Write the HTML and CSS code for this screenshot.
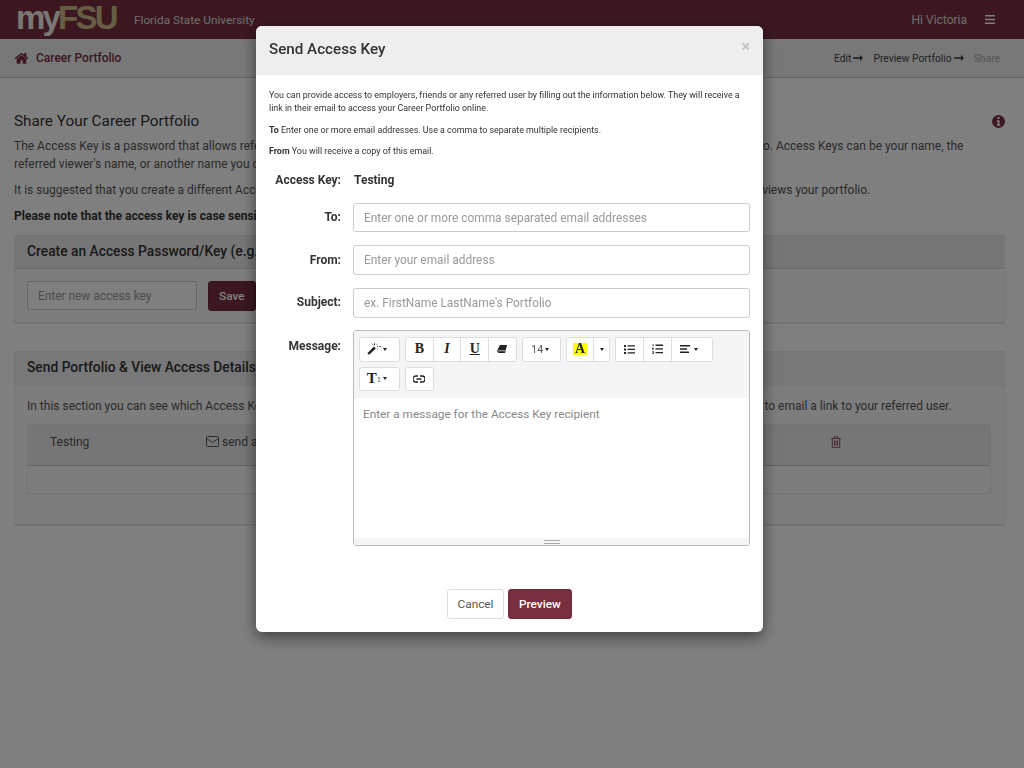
FILE: index.html
```html
<!DOCTYPE html>
<html lang="en">

<head>
  <meta charset="UTF-8">
  <title>Share Your Career Portfolio</title>
  <link rel="stylesheet" href="styles.css">
</head>

<body>
  <!-- Top bar -->
  <header class="topbar">
    <div class="topbar-left">
      <span class="logo"><span class="logo-my">my</span><span class="logo-fsu">FSU</span></span>
      <span class="school">Florida State University</span>
    </div>
    <div class="topbar-right">
      <span>Hi Victoria</span>
      <svg class="burger" width="10" height="9" viewBox="0 0 10 9"><path d="M0 0h10v1.600H0zM0 3.700h10v1.600H0zM0 7.400h10V9H0z" fill="#fff"/></svg>
    </div>
  </header>

  <!-- Breadcrumb bar -->
  <nav class="subbar">
    <div class="crumb">
      <svg width="15" height="12" viewBox="0 192 1792 1344"><path d="M1472 992v480q0 26-19 45t-45 19h-384v-384h-256v384h-384q-26 0-45-19t-19-45v-480q0-1 .5-3t.5-3l575-474 575 474q1 2 1 6zm223-69l-62 74q-8 9-21 11h-3q-13 0-21-7l-692-577-692 577q-12 8-24 7-13-2-21-11l-62-74q-8-10-7-23.500t11-21.500l719-599q32-26 76-26t76 26l244 204v-195q0-14 9-23t23-9h192q14 0 23 9t9 23v408l219 182q10 8 11 21.500t-7 23.500z" fill="#782f40"/></svg>
      <span>Career Portfolio</span>
    </div>
    <div class="steps">
      <span>Edit</span>
      <svg width="10" height="6" viewBox="0 0 10 6"><path d="M0 2.300h7V0l3 3-3 3V3.700H0z" fill="#333"/></svg>
      <span class="step-gap">Preview Portfolio</span>
      <svg width="10" height="6" viewBox="0 0 10 6"><path d="M0 2.300h7V0l3 3-3 3V3.700H0z" fill="#333"/></svg>
      <span class="step-gap step-off">Share</span>
    </div>
  </nav>

  <main class="content">
    <div class="title-row">
      <h2>Share Your Career Portfolio</h2>
      <svg width="13" height="13" viewBox="0 0 13 13"><circle cx="6.500" cy="6.500" r="6.500" fill="#782f40"/><path d="M5.500 2h2v2h-2zM4.800 5.200h2.700v4.300h.8v1.300H4.800V9.500h.8V6.500h-.8z" fill="#fff"/></svg>
    </div>
    <p>The Access Key is a password that allows referred viewers to see the content that you have carefully chosen to include in your Career Portfolio. Access Keys can be your name, the<br>referred viewer's name, or another name you decide on.</p>
    <p>It is suggested that you create a different Access Key for each person you share with, so that you will be able to know when each person first views your portfolio.</p>
    <p class="note">Please note that the access key is case sensitive.</p>

    <section class="panel panel-key">
      <h3 class="panel-head">Create an Access Password/Key (e.g. your name)</h3>
      <div class="panel-body key-form">
        <input class="field key-field" placeholder="Enter new access key">
        <button class="btn btn-main">Save</button>
      </div>
    </section>

    <section class="panel panel-send">
      <h3 class="panel-head head-plain">Send Portfolio &amp; View Access Details</h3>
      <div class="panel-body">
        <p class="send-text">In this section you can see which Access Keys you have created and when they were last used online. Click on "send a link to this portfolio" to email a link to your referred user.</p>
        <div class="keys-table">
          <div class="keys-row">
            <span class="key-name">Testing</span>
            <span class="key-send">
              <svg width="13" height="11" viewBox="0 0 13 11"><path d="M1.500.5h10a1 1 0 0 1 1 1v8a1 1 0 0 1-1 1h-10a1 1 0 0 1-1-1v-8a1 1 0 0 1 1-1zM.8 2.500l5.700 4 5.700-4" fill="none" stroke="#555"/></svg>
              send a link
            </span>
            <svg class="key-trash" width="10" height="12" viewBox="0 0 10 12"><path d="M0 2.500h10M3.300 2.500V.7h3.400v1.800M1.300 2.500v8.800h7.400V2.500M3.500 4.500v5M5 4.500v5M6.500 4.500v5" fill="none" stroke="#782f40" stroke-width=".8"/></svg>
          </div>
          <div class="keys-foot"></div>
        </div>
      </div>
    </section>
  </main>

  <!-- Send access key dialog -->
  <div class="backdrop">
    <div class="modal">
      <div class="modal-head">
        <h4>Send Access Key</h4>
        <span class="close">×</span>
      </div>
      <div class="modal-body">
        <p>You can provide access to employers, friends or any referred user by filling out the information below. They will receive a link in their email to access your Career Portfolio online.</p>
        <p><b>To</b> Enter one or more email addresses. Use a comma to separate multiple recipients.</p>
        <p><b>From</b> You will receive a copy of this email.</p>

        <div class="form-row row-key">
          <label>Access Key:</label>
          <b class="key-value">Testing</b>
        </div>
        <div class="form-row row-to">
          <label>To:</label>
          <input class="field" placeholder="Enter one or more comma separated email addresses">
        </div>
        <div class="form-row row-from">
          <label>From:</label>
          <input class="field" placeholder="Enter your email address">
        </div>
        <div class="form-row row-subject">
          <label>Subject:</label>
          <input class="field" placeholder="ex. FirstName LastName's Portfolio">
        </div>
        <div class="form-row row-message">
          <label>Message:</label>
          <div class="editor">
            <div class="toolbar">
              <div class="tool-group">
                <button class="tool tool-wide">
                  <svg width="14" height="12" viewBox="0 0 14 12"><path d="M.3 10.300 7 3.600l1.800 1.800-6.700 6.300z" fill="#222"/><path d="M7.500.3v2M10 3.500h.9M12.300 3.500h1.400M9.800 1.500l.7-.7M9.800 5.500l.7.7M5.500 1.500l-.7-.7" stroke="#222" fill="none"/></svg>
                  <i class="caret"></i>
                </button>
              </div>
              <div class="tool-group">
                <button class="tool tool-b">B</button>
                <button class="tool tool-i">I</button>
                <button class="tool tool-u">U</button>
                <button class="tool">
                  <svg width="10" height="9" viewBox="0 0 10 9"><path d="M3 0h7L8 8H1.500L0 6z" fill="#222"/><path d="M1 5.800h7.500" stroke="#fff" stroke-width=".7"/></svg>
                </button>
              </div>
              <div class="tool-group">
                <button class="tool tool-size">14<i class="caret"></i></button>
              </div>
              <div class="tool-group">
                <button class="tool tool-color"><span class="hl">A</span></button>
                <button class="tool tool-arrow"><i class="caret"></i></button>
              </div>
              <div class="tool-group">
                <button class="tool">
                  <svg width="11" height="9" viewBox="0 0 11 9"><path d="M0 0h2v2H0zM0 3.500h2v2H0zM0 7h2v2H0zM3.500.3H11v1.300H3.500zM3.500 3.800H11v1.300H3.500zM3.500 7.300H11v1.300H3.500z" fill="#222"/></svg>
                </button>
                <button class="tool">
                  <svg width="11" height="10" viewBox="0 0 11 10"><path d="M3.500.6H11v1.300H3.500zM3.500 4.300H11v1.300H3.500zM3.500 8H11v1.300H3.500zM.7 0h.8v2.500H.7zM0 3.800h1.800v.6H.7v.4h1.100v.6H0zM0 7.300h1.800V10H0v-.5h1.100v-.5H.4v-.4h.7V7.800H0z" fill="#222"/></svg>
                </button>
                <button class="tool tool-wide tool-align">
                  <svg width="10" height="8" viewBox="0 0 10 8"><path d="M0 0h10v1.400H0zM0 3.300h7v1.400H0zM0 6.600h9V8H0z" fill="#222"/></svg>
                  <i class="caret"></i>
                </button>
              </div>
              <div class="tool-group">
                <button class="tool tool-wide tool-t">T<span class="t-bar">↕</span><i class="caret"></i></button>
              </div>
              <div class="tool-group">
                <button class="tool">
                  <svg width="12" height="8" viewBox="0 0 12 8"><path d="M5 1H3a3 3 0 0 0 0 6h2M7 1h2a3 3 0 0 1 0 6H7M3.500 4h5" fill="none" stroke="#222" stroke-width="1.300"/></svg>
                </button>
              </div>
            </div>
            <div class="editor-text">Enter a message for the Access Key recipient</div>
            <div class="statusbar"><span class="grip"></span></div>
          </div>
        </div>
      </div>
      <div class="modal-foot">
        <button class="btn btn-plain">Cancel</button>
        <button class="btn btn-main">Preview</button>
      </div>
    </div>
  </div>
</body>

</html>
```

FILE: styles.css
```css
* {
  box-sizing: border-box;
}

body {
  margin: 0;
  height: 768px;
  overflow: hidden;
  font-family: 'Roboto', 'Liberation Sans', sans-serif;
  font-size: 12px;
  color: #333;
  background-color: #fff;
}

.topbar {
  height: 39px;
  background-color: #782f40;
  display: flex;
  justify-content: space-between;
  align-items: center;
  padding: 0 29px 0 18px;
  color: #fff;
}

.topbar-left {
  display: flex;
  align-items: center;
}

.logo {
  font-family: 'Liberation Sans', sans-serif;
  font-size: 33px;
  font-weight: bold;
  letter-spacing: -2.800px;
  line-height: 33px;
  width: 118px;
  margin: -5px 0 0 -2px;
}

.logo-my {
  color: #f4f0e8;
}

.logo-fsu {
  color: #ceb888;
}

.school {
  color: #ddd;
  font-size: 11.800px;
}

.topbar-right {
  display: flex;
  align-items: center;
  gap: 18px;
  color: #ddd;
}

.subbar {
  height: 39px;
  background-color: #f0f0f0;
  border-bottom: 1px solid #ccc;
  display: flex;
  justify-content: space-between;
  align-items: center;
  padding: 0 24px 0 14px;
}

.crumb {
  display: flex;
  align-items: center;
  gap: 7px;
  color: #782f40;
  font-weight: 500;
}

.steps {
  display: flex;
  align-items: center;
  gap: 2px;
  font-size: 10.300px;
  color: #444;
}

.step-gap {
  margin-left: 8px;
}

.step-off {
  color: #aaa;
}

.content {
  padding: 33px 19px 0 14px;
}

.title-row {
  display: flex;
  justify-content: space-between;
  align-items: center;
  margin-bottom: 6px;
}

h2 {
  margin: 0;
  font-size: 15.300px;
  font-weight: 400;
  line-height: 20px;
  color: #333;
}

.content p {
  margin: 0 0 8px;
  line-height: 18px;
  color: #555;
  width: 985px;
}

.content .note {
  font-weight: 700;
  color: #333;
  margin-bottom: 10px;
}

.panel {
  border: 1px solid #e8e8e8;
  border-bottom-width: 2px;
  background-color: #fbfbfb;
}

.panel-key {
  height: 89px;
  margin-bottom: 27px;
}

.panel-send {
  height: 175px;
}

.panel-head {
  margin: 0;
  height: 33px;
  padding: 0 12px;
  font-size: 13.800px;
  font-weight: 500;
  line-height: 31px;
  background-color: #ececec;
  border-bottom: 1px solid #d8d8d8;
  color: #333;
}

.head-plain {
  height: 34px;
  border-bottom: none;
  line-height: 30px;
  background-color: #f0f0f0;
}

.panel-body {
  padding: 12px 12px;
}

.key-form {
  display: flex;
  gap: 11px;
}

.panel-send .panel-body {
  padding-top: 11px;
}

.content .send-text {
  width: 940px;
  white-space: nowrap;
  margin-bottom: 9px;
}

.keys-table {
  width: 964px;
  border: 1px solid #e4e4e4;
}

.keys-row {
  height: 41px;
  background-color: #ececec;
  border-bottom: 1px solid #ccc;
  display: flex;
  align-items: center;
  padding: 0 0 7px 22px;
}

.key-name {
  width: 156px;
  color: #555;
}

.key-send {
  width: 625px;
  display: flex;
  align-items: center;
  gap: 3px;
  color: #555;
}

.keys-foot {
  height: 27px;
}

.field {
  display: block;
  width: 100%;
  height: 29px;
  border: 1px solid #ccc;
  border-radius: 3px;
  padding: 0 10px;
  font-family: inherit;
  font-size: 11.900px;
  background-color: #fff;
}

.key-field {
  width: 170px;
}

.field::placeholder {
  color: #999;
}

.btn {
  height: 30px;
  padding: 0 10px;
  border-radius: 3px;
  font-family: inherit;
  font-size: 11.800px;
  font-weight: 500;
}

.btn-main {
  background-color: #782f40;
  border: 1px solid #6a2636;
  color: #fff;
}

.btn-plain {
  width: 57px;
  padding: 0;
  background-color: #fff;
  border: 1px solid #ddd;
  color: #555;
  font-weight: 400;
}

/* dialog */
.backdrop {
  position: fixed;
  top: 0;
  left: 0;
  width: 100%;
  height: 100%;
  background-color: rgba(0, 0, 0, 0.5);
}

.modal {
  position: absolute;
  top: 26px;
  left: 256px;
  width: 507px;
  height: 606px;
  background-color: #fff;
  border-radius: 6px;
  box-shadow: 0 5px 15px rgba(0, 0, 0, 0.5);
  overflow: hidden;
}

.modal-head {
  height: 49px;
  background-color: #eee;
  display: flex;
  justify-content: space-between;
  padding: 13px 13px 0 13px;
}

h4 {
  margin: 0;
  font-size: 15.200px;
  font-weight: 500;
  line-height: 20px;
  color: #333;
}

.close {
  font-size: 16px;
  font-weight: 700;
  line-height: 14px;
  padding-top: 1px;
  color: #c4c4c4;
}

.modal-body {
  padding: 14px 13px 0;
}

.modal-body p {
  margin: 0 0 8.500px;
  font-size: 8.900px;
  line-height: 13px;
  color: #333;
}

.form-row {
  display: flex;
  align-items: flex-start;
  margin-bottom: 13px;
}

.form-row label {
  width: 72px;
  margin-right: 12px;
  text-align: right;
  font-weight: 700;
  line-height: 14px;
  color: #333;
}

.row-key {
  margin-top: 15px;
  margin-bottom: 16px;
}

.row-subject {
  margin-bottom: 12px;
}

.form-row .field {
  width: 397px;
  height: 30px;
}

.row-to .field {
  height: 29px;
}

.key-value {
  color: #333;
  line-height: 14px;
  margin-left: 1px;
}

.form-row:not(.row-key) label {
  padding-top: 7px;
}

.form-row.row-from label {
  padding-top: 8px;
}

.form-row.row-message label {
  padding-top: 9px;
}

.editor {
  width: 397px;
  height: 216px;
  border: 1px solid #bbb;
  border-radius: 3px;
  display: flex;
  flex-direction: column;
  overflow: hidden;
}

.toolbar {
  background-color: #f5f5f5;
  padding: 6px 5px 0;
  height: 67px;
  display: flex;
  flex-wrap: wrap;
  align-content: flex-start;
  gap: 5px 5px;
}

.tool-group {
  display: flex;
}

.tool {
  width: 28.700px;
  height: 24.500px;
  padding: 0;
  background-color: #fff;
  border: 1px solid #ddd;
  margin-left: -1px;
  display: flex;
  align-items: center;
  justify-content: center;
  gap: 2px;
  font-family: 'Liberation Serif', serif;
  font-size: 14px;
  color: #222;
}

.tool-group .tool:first-child {
  margin-left: 0;
  border-radius: 3px 0 0 3px;
}

.tool-group .tool:last-child {
  border-radius: 0 3px 3px 0;
}

.tool-group .tool:only-child {
  border-radius: 3px;
}

.tool-wide {
  width: 41px;
  padding-right: 5px;
}

.tool-align {
  width: 41.700px;
  padding-right: 5px;
  gap: 4px;
}

.tool-b {
  font-weight: 700;
}

.tool-i {
  font-style: italic;
  font-weight: 700;
}

.tool-u {
  font-weight: 700;
  text-decoration: underline;
}

.tool-size {
  width: 39px;
  padding-right: 2px;
  font-family: 'Roboto', sans-serif;
  font-size: 10.500px;
  color: #555;
}

.tool-color {
  font-weight: 700;
}

.tool-arrow {
  width: 17px;
}

.hl {
  background-color: #ff0;
  padding: 0 2px;
  line-height: 12px;
}

.tool-t {
  font-weight: 700;
  font-size: 15px;
}

.t-bar {
  font-size: 9px;
  font-weight: 400;
  margin-left: -2px;
}

.caret {
  display: inline-block;
  width: 0;
  height: 0;
  border-left: 2.500px solid transparent;
  border-right: 2.500px solid transparent;
  border-top: 3px solid #222;
}

.editor-text {
  flex: 1;
  padding: 8px 9px;
  font-size: 11.800px;
  line-height: 16px;
  color: #888;
  background-color: #fff;
}

.statusbar {
  height: 7px;
  background-color: #f5f5f5;
  display: flex;
  justify-content: center;
  align-items: center;
}

.grip {
  width: 16px;
  height: 4px;
  border-top: 1px solid #aaa;
  border-bottom: 1px solid #aaa;
}

.modal-foot {
  position: absolute;
  top: 563px;
  left: 191px;
  display: flex;
  gap: 4px;
}
```
